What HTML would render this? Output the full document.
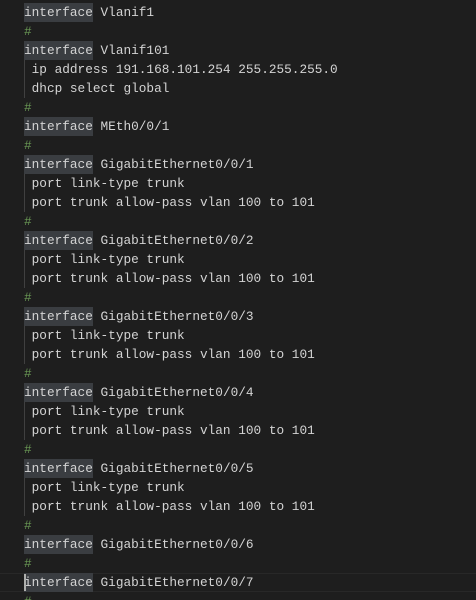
<!DOCTYPE html>
<html style="overflow:hidden;height:600px"><head><style>
body{margin:0;background:#1e1e1e;width:476px;height:600px;overflow:hidden;position:relative}
.e{position:absolute;left:0;top:3px;width:476px;height:597px;overflow:hidden;font-family:"Liberation Mono",monospace;font-size:12.75px;color:#d4d4d4}
.l{height:19px;line-height:19px;padding-left:24px;white-space:pre;position:relative}
.k{background:#3a3d41;display:inline-block;height:19px}
.c{color:#6a9955}
.g::before{content:"";position:absolute;left:24px;top:0;bottom:0;width:1px;background:#404040}
.cur{box-shadow:inset 0 1px #282828,inset 0 -1px #282828}
.cur::after{content:"";position:absolute;left:24px;top:1px;width:2px;height:17px;background:#aeafad}
</style></head><body><div class="e">
<div class="l"><span class="k">interface</span> Vlanif1</div>
<div class="l c">#</div>
<div class="l"><span class="k">interface</span> Vlanif101</div>
<div class="l g"> ip address 191.168.101.254 255.255.255.0</div>
<div class="l g"> dhcp select global</div>
<div class="l c">#</div>
<div class="l"><span class="k">interface</span> MEth0/0/1</div>
<div class="l c">#</div>
<div class="l"><span class="k">interface</span> GigabitEthernet0/0/1</div>
<div class="l g"> port link-type trunk</div>
<div class="l g"> port trunk allow-pass vlan 100 to 101</div>
<div class="l c">#</div>
<div class="l"><span class="k">interface</span> GigabitEthernet0/0/2</div>
<div class="l g"> port link-type trunk</div>
<div class="l g"> port trunk allow-pass vlan 100 to 101</div>
<div class="l c">#</div>
<div class="l"><span class="k">interface</span> GigabitEthernet0/0/3</div>
<div class="l g"> port link-type trunk</div>
<div class="l g"> port trunk allow-pass vlan 100 to 101</div>
<div class="l c">#</div>
<div class="l"><span class="k">interface</span> GigabitEthernet0/0/4</div>
<div class="l g"> port link-type trunk</div>
<div class="l g"> port trunk allow-pass vlan 100 to 101</div>
<div class="l c">#</div>
<div class="l"><span class="k">interface</span> GigabitEthernet0/0/5</div>
<div class="l g"> port link-type trunk</div>
<div class="l g"> port trunk allow-pass vlan 100 to 101</div>
<div class="l c">#</div>
<div class="l"><span class="k">interface</span> GigabitEthernet0/0/6</div>
<div class="l c">#</div>
<div class="l cur"><span class="k">interface</span> GigabitEthernet0/0/7</div>
<div class="l c">#</div>
</div></body></html>
